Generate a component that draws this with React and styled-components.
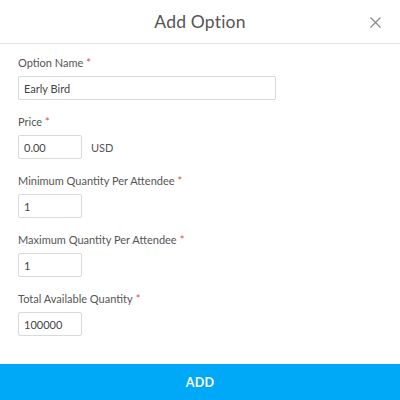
import React from "react";
import styled, { createGlobalStyle } from "styled-components";

const GlobalStyle = createGlobalStyle`
  html, body {
    margin: 0;
    padding: 0;
    background: #fff;
  }
  body {
    font-family: Lato, "Open Sans", sans-serif;
  }
`;

const Modal = styled.div`
  width: 400px;
  height: 400px;
  display: flex;
  flex-direction: column;
  background: #fff;
  color: #555;
`;

const Header = styled.div`
  height: 44px;
  flex: none;
  display: flex;
  align-items: center;
  justify-content: center;
  border-bottom: 1px solid #e3e3e3;
  position: relative;
  box-sizing: border-box;
`;

const Title = styled.h1`
  margin: 0;
  font-size: 17.5px;
  font-weight: 400;
  color: #555;
  letter-spacing: 0.2px;
`;

const Close = styled.button`
  position: absolute;
  right: 14px;
  top: 11px;
  width: 22px;
  height: 22px;
  border: 0;
  padding: 0;
  background: none;
  display: flex;
  align-items: center;
  justify-content: center;
  color: #888;
`;

const Body = styled.div`
  flex: 1;
  padding: 11px 18px 0;
  display: flex;
  flex-direction: column;
  gap: 14px;
`;

const Field = styled.div`
  display: flex;
  flex-direction: column;
  gap: 6px;
`;

const Label = styled.label`
  font-size: 11px;
  line-height: 15px;
  color: #555;
`;

const Star = styled.span`
  color: #e8474b;
  margin-left: 3px;
`;

const Row = styled.div`
  display: flex;
  align-items: center;
  gap: 9px;
`;

const Input = styled.input`
  box-sizing: border-box;
  width: ${p => (p.$wide ? "258px" : "64px")};
  height: 24px;
  border: 1px solid #d9d9d9;
  border-radius: 2px;
  padding: 0 5px;
  font-family: inherit;
  font-size: 11px;
  color: #444;
  outline: none;
`;

const Unit = styled.span`
  font-size: 11px;
  color: #555;
`;

const AddButton = styled.button`
  flex: none;
  height: 36px;
  border: 0;
  background: #00a8f8;
  color: #fff;
  font-family: Lato, sans-serif;
  font-weight: 700;
  font-size: 12.5px;
  letter-spacing: 0.3px;
`;

const fields = [
  { label: "Option Name", value: "Early Bird", wide: true },
  { label: "Price", value: "0.00", unit: "USD" },
  { label: "Minimum Quantity Per Attendee", value: "1" },
  { label: "Maximum Quantity Per Attendee", value: "1" },
  { label: "Total Available Quantity", value: "100000" }
];

const App = () => (
  <Modal>
    <GlobalStyle />
    <Header>
      <Title>Add Option</Title>
      <Close aria-label="Close">
        <svg width="11" height="11" viewBox="0 0 11 11">
          <path d="M0.5 0.5 L10.5 10.5 M10.5 0.5 L0.5 10.5" stroke="#888" strokeWidth="1.2" />
        </svg>
      </Close>
    </Header>
    <Body>
      {fields.map(f => (
        <Field key={f.label}>
          <Label>
            {f.label}
            <Star>*</Star>
          </Label>
          <Row>
            <Input $wide={f.wide} defaultValue={f.value} />
            {f.unit && <Unit>{f.unit}</Unit>}
          </Row>
        </Field>
      ))}
    </Body>
    <AddButton>ADD</AddButton>
  </Modal>
);

export default App;
